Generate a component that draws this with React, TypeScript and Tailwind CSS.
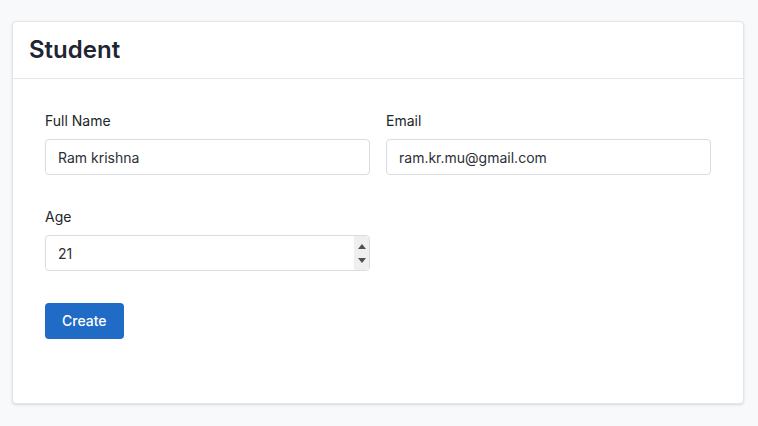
import React from 'react';

const Field: React.FC<{ label: string; value: string; spinner?: boolean }> = ({ label, value, spinner }) => (
  <div className="mb-8">
    <label className="block text-sm leading-5 font-normal text-[#212529] mb-2">{label}</label>
    <div className="relative">
      <input
        readOnly
        value={value}
        className="block w-full h-9 px-3 text-sm text-[#2b3036] bg-white border border-[#d9dce0] rounded outline-none"
      />
      {spinner && (
        <div className="absolute right-px top-px bottom-px w-[15px] bg-[#efefef] flex flex-col items-center justify-center gap-[9px] rounded-r">
          <span className="w-0 h-0 border-x-[4px] border-x-transparent border-b-[5px] border-b-[#505050]" />
          <span className="w-0 h-0 border-x-[4px] border-x-transparent border-t-[5px] border-t-[#505050]" />
        </div>
      )}
    </div>
  </div>
);

export default function App() {
  return (
    <div className="min-h-screen bg-[#f8f9fa] px-3 pt-[21px] font-['Inter',sans-serif]">
      <div className="w-[732px] bg-white border border-[#e3e5e8] rounded shadow-sm">
        <div className="h-[57px] px-4 flex items-center border-b border-[#e3e5e8]">
          <h1 className="text-2xl font-semibold text-[#1f2533]">Student</h1>
        </div>
        <div className="p-8">
          <div className="grid grid-cols-2 gap-x-4">
            <Field label="Full Name" value="Ram krishna" />
            <Field label="Email" value="ram.kr.mu@gmail.com" />
            <Field label="Age" value="21" spinner />
          </div>
          <div className="mb-8">
            <button className="h-9 px-[17px] bg-[#1f6bc6] text-white text-sm font-medium rounded">Create</button>
          </div>
        </div>
      </div>
    </div>
  );
}
